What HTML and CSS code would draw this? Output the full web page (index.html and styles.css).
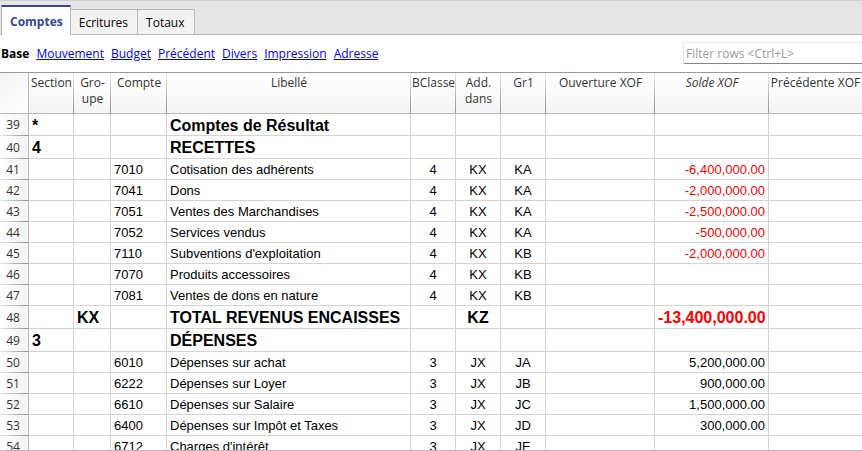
FILE: index.html
```html
<!DOCTYPE html>
<html lang="fr">
<head>
<meta charset="utf-8">
<title>Comptes</title>
<link rel="stylesheet" href="styles.css">
</head>
<body>
<div class="tabs" role="tablist">
  <button class="tab tab-active" role="tab" aria-selected="true">Comptes</button>
  <button class="tab" role="tab" aria-selected="false">Ecritures</button>
  <button class="tab" role="tab" aria-selected="false">Totaux</button>
</div>
<div class="toolbar">
  <nav class="views">
    <strong>Base</strong>
    <a href="#mouvement">Mouvement</a>
    <a href="#budget">Budget</a>
    <a href="#precedent">Précédent</a>
    <a href="#divers">Divers</a>
    <a href="#impression">Impression</a>
    <a href="#adresse">Adresse</a>
  </nav>
  <input class="filter" type="text" placeholder="Filter rows &lt;Ctrl+L&gt;" aria-label="Filter rows">
</div>
<main class="sheet">
<table>
  <colgroup>
    <col class="c-num"><col class="c-code"><col class="c-groupe"><col class="c-compte"><col class="c-libelle">
    <col class="c-code"><col class="c-code"><col class="c-code"><col class="c-ouverture"><col class="c-solde"><col>
  </colgroup>
  <thead>
    <tr><th></th><th>Section</th><th>Gro-<br>upe</th><th>Compte</th><th>Libellé</th><th>BClasse</th><th>Add.<br>dans</th><th>Gr1</th><th>Ouverture XOF</th><th class="current">Solde XOF</th><th>Précédente XOF</th></tr>
  </thead>
  <tbody>
    <tr class="title first"><th>39</th><td>*</td><td></td><td></td><td>Comptes de Résultat</td><td></td><td></td><td></td><td></td><td></td><td></td></tr>
    <tr class="title"><th>40</th><td>4</td><td></td><td></td><td>RECETTES</td><td></td><td></td><td></td><td></td><td></td><td></td></tr>
    <tr><th>41</th><td></td><td></td><td>7010</td><td>Cotisation des adhérents</td><td>4</td><td>KX</td><td>KA</td><td></td><td class="neg">-6,400,000.00</td><td></td></tr>
    <tr><th>42</th><td></td><td></td><td>7041</td><td>Dons</td><td>4</td><td>KX</td><td>KA</td><td></td><td class="neg">-2,000,000.00</td><td></td></tr>
    <tr><th>43</th><td></td><td></td><td>7051</td><td>Ventes des Marchandises</td><td>4</td><td>KX</td><td>KA</td><td></td><td class="neg">-2,500,000.00</td><td></td></tr>
    <tr><th>44</th><td></td><td></td><td>7052</td><td>Services vendus</td><td>4</td><td>KX</td><td>KA</td><td></td><td class="neg">-500,000.00</td><td></td></tr>
    <tr><th>45</th><td></td><td></td><td>7110</td><td>Subventions d'exploitation</td><td>4</td><td>KX</td><td>KB</td><td></td><td class="neg">-2,000,000.00</td><td></td></tr>
    <tr><th>46</th><td></td><td></td><td>7070</td><td>Produits accessoires</td><td>4</td><td>KX</td><td>KB</td><td></td><td></td><td></td></tr>
    <tr><th>47</th><td></td><td></td><td>7081</td><td>Ventes de dons en nature</td><td>4</td><td>KX</td><td>KB</td><td></td><td></td><td></td></tr>
    <tr class="title"><th>48</th><td></td><td>KX</td><td></td><td>TOTAL REVENUS ENCAISSES</td><td></td><td>KZ</td><td></td><td></td><td class="neg">-13,400,000.00</td><td></td></tr>
    <tr class="title"><th>49</th><td>3</td><td></td><td></td><td>DÉPENSES</td><td></td><td></td><td></td><td></td><td></td><td></td></tr>
    <tr><th>50</th><td></td><td></td><td>6010</td><td>Dépenses sur achat</td><td>3</td><td>JX</td><td>JA</td><td></td><td>5,200,000.00</td><td></td></tr>
    <tr><th>51</th><td></td><td></td><td>6222</td><td>Dépenses sur Loyer</td><td>3</td><td>JX</td><td>JB</td><td></td><td>900,000.00</td><td></td></tr>
    <tr><th>52</th><td></td><td></td><td>6610</td><td>Dépenses sur Salaire</td><td>3</td><td>JX</td><td>JC</td><td></td><td>1,500,000.00</td><td></td></tr>
    <tr><th>53</th><td></td><td></td><td>6400</td><td>Dépenses sur Impôt et Taxes</td><td>3</td><td>JX</td><td>JD</td><td></td><td>300,000.00</td><td></td></tr>
    <tr><th>54</th><td></td><td></td><td>6712</td><td>Charges d'intérêt</td><td>3</td><td>JX</td><td>JE</td><td></td><td></td><td></td></tr>
  </tbody>
</table>
</main>
</body>
</html>
```
FILE: styles.css
```css
* { box-sizing: border-box; }

body {
  margin: 0;
  height: 100vh;
  display: flex;
  flex-direction: column;
  overflow: hidden;
  background: #fff;
  color: #000;
  font: 12px/16px "Open Sans", "Noto Sans", sans-serif;
}

/* Tab strip */
.tabs {
  display: flex;
  align-items: flex-end;
  flex: none;
  padding: 4px 0 0 1px;
  background: #e5e5e5;
  border-top: 1px solid #d0d0d0;
  box-shadow: inset 0 -1px #b9b9b9;
}
.tab {
  margin: 0;
  height: 26px;
  padding: 4px 9px 3px 8px;
  border: 1px solid #b9b9b9;
  border-left: 0;
  background: #f2f2f2;
  color: #000;
  font: inherit;
}
.tab-active {
  height: 30px;
  padding: 1px 7px 0 8px;
  border-left: 1px solid #b9b9b9;
  border-top: 2px solid #33479a;
  border-bottom: 0;
  background: #fff;
  color: #33479a;
  font-weight: 700;
}

/* View links and filter */
.toolbar {
  display: flex;
  flex: none;
  align-items: center;
  justify-content: space-between;
  padding: 7px 0 8px 1px;
}
.views { display: flex; gap: 7px; padding-top: 2px; }
.views a { color: #00f; }
.filter {
  width: 179px;
  height: 22px;
  padding: 1px 2px;
  border: 1px solid #e4e4e4;
  border-right: 0;
  border-bottom-color: #868686;
  border-radius: 2px 0 0 2px;
  background: #fff;
  font: inherit;
}
.filter::placeholder { color: #999; opacity: 1; }

/* Account grid */
.sheet {
  flex: 1;
  min-height: 0;
  overflow: hidden;
  border-top: 1px solid #999;
  border-bottom: 1px solid #b9b9b9;
}
table {
  width: 100%;
  table-layout: fixed;
  border-collapse: separate;
  border-spacing: 0;
}
.c-num { width: 29px; }
.c-code { width: 45px; }
.c-groupe { width: 37px; }
.c-compte { width: 56px; }
.c-libelle { width: 244px; }
.c-ouverture { width: 109px; }
.c-solde { width: 114px; }

th { padding: 0; font-weight: 400; color: #333; white-space: nowrap; }
thead th {
  height: 41px;
  padding: 2px 0 0;
  vertical-align: top;
  border-bottom: 1px solid #b9b9b9;
  background:
    linear-gradient(#e8e8e8, #909090) right / 1px 100% no-repeat,
    linear-gradient(#fff, #f4f4f4);
}
thead th:first-child {
  background:
    linear-gradient(#b9b9b9, #b9b9b9) right / 1px 100% no-repeat,
    linear-gradient(135deg, #f4f4f4, #fff);
}
thead th:last-child { background: linear-gradient(#fff, #f4f4f4); }
thead .current { font-style: italic; }

tbody th {
  padding: 0 2px 1px 0;
  line-height: 19px;
  border-right: 1px solid #b9b9b9;
  background:
    linear-gradient(90deg, #e8e8e8, #909090) bottom / 100% 1px no-repeat,
    linear-gradient(90deg, #fff, #f3f3f3);
}
td {
  height: 21px;
  padding: 2px 3px 0;
  border-right: 1px solid #d4d4d4;
  border-bottom: 1px solid #d4d4d4;
  font: 13px/18px "Liberation Sans", Arial, sans-serif;
  white-space: nowrap;
}
td:last-child { border-right: 0; }
td:nth-child(n+6):nth-child(-n+8) { text-align: center; }
td:nth-child(n+9) { text-align: right; }
.title td { height: 23px; font-size: 16px; font-weight: 700; }
.first td { height: 22px; }
.neg { color: #f00; }
```
